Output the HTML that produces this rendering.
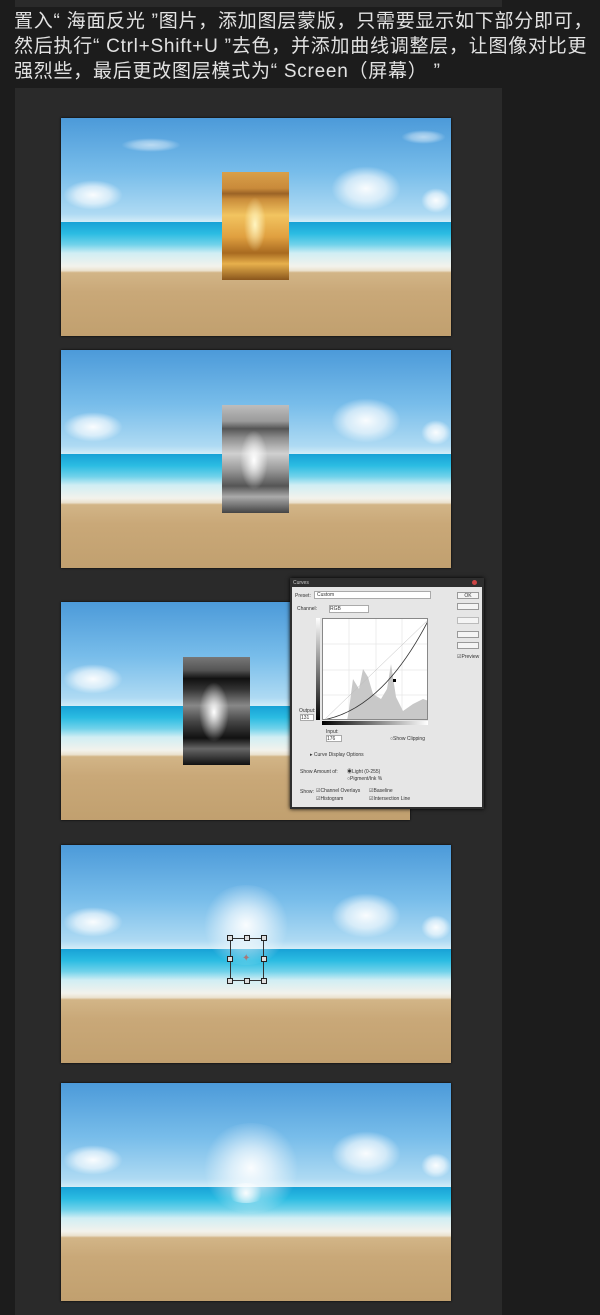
<!DOCTYPE html>
<html><head><meta charset="utf-8"><style>
*{margin:0;padding:0;box-sizing:border-box}
body{width:600px;height:1315px;background:#1c1c1c;position:relative;overflow:hidden;font-family:"Liberation Sans","Noto Sans CJK SC",sans-serif}
.panel{position:absolute;left:15px;width:487px;background:#2a2a2a}
.txt{position:absolute;left:14px;top:9px;color:#e2e2e2;font-size:19px;line-height:25px;letter-spacing:0.75px;white-space:nowrap}
.b{position:absolute;height:218px;overflow:hidden;background:linear-gradient(180deg,#4c9ad9 0%,#78bdea 25%,#aedaf3 44%,#d2ecf7 47.6%,#18a2d6 47.8%,#2bbce2 53%,#70d2ea 58%,#d0eef4 62%,#f3f2ec 68%,#ebe2cf 70%,#d2b587 71%,#c9a878 80%,#c1a06f 100%);box-shadow:0 0 2px #000}
.c{position:absolute;background:radial-gradient(ellipse at center,rgba(255,255,255,.95) 0%,rgba(255,255,255,.6) 40%,rgba(255,255,255,0) 70%)}
.glow{position:absolute;border-radius:50%;background:radial-gradient(circle,rgba(255,255,255,.95) 0%,rgba(255,255,255,.6) 30%,rgba(255,255,255,0) 70%)}
.strip{position:absolute;width:67px;height:108px}
.h{position:absolute;width:6px;height:6px;border:1px solid #222;background:#ddd}
</style></head><body>
<div class="panel" style="top:0;height:7px"></div>
<div class="panel" style="top:88px;height:1227px"></div>
<div class="txt">置入“ 海面反光 ”图片，添加图层蒙版，只需要显示如下部分即可，<br>然后执行“ Ctrl+Shift+U ”去色，并添加曲线调整层，让图像对比更<br>强烈些，最后更改图层模式为“ Screen（屏幕）  ”</div>

<!-- image 1 -->
<div class="b" style="left:61px;top:118px;width:390px">
 <div class="c" style="left:2px;top:62px;width:60px;height:30px"></div>
 <div class="c" style="left:270px;top:48px;width:70px;height:45px"></div>
 <div class="c" style="left:360px;top:70px;width:30px;height:25px"></div>
 <div class="c" style="left:60px;top:20px;width:60px;height:14px;opacity:.6"></div>
 <div class="c" style="left:340px;top:12px;width:45px;height:14px;opacity:.6"></div>
</div>
<div class="strip" style="left:222px;top:172px;background:linear-gradient(180deg,#d9a04a 0%,#c98a3a 15%,#9b6326 20%,#c98c3a 25%,#f2c460 40%,#e0a040 60%,#a86a20 75%,#e7b04c 85%,#8a561c 100%)"><div style="position:absolute;left:22px;top:25px;width:22px;height:55px;background:radial-gradient(ellipse,#fff5c0,rgba(255,220,120,0) 70%)"></div></div>

<!-- image 2 -->
<div class="b" style="left:61px;top:350px;width:390px">
 <div class="c" style="left:2px;top:62px;width:60px;height:30px"></div>
 <div class="c" style="left:270px;top:48px;width:70px;height:45px"></div>
 <div class="c" style="left:360px;top:70px;width:30px;height:25px"></div>
</div>
<div class="strip" style="left:222px;top:405px;background:linear-gradient(180deg,#bdbdbd 0%,#9a9a9a 15%,#555 22%,#8a8a8a 30%,#d0d0d0 45%,#999 60%,#555 75%,#aaa 85%,#444 100%)"><div style="position:absolute;left:18px;top:25px;width:28px;height:60px;background:radial-gradient(ellipse,#fff,rgba(255,255,255,0) 70%)"></div></div>

<!-- image 3 -->
<div class="b" style="left:61px;top:602px;width:349px">
 <div class="c" style="left:2px;top:62px;width:60px;height:30px"></div>
</div>
<div class="strip" style="left:183px;top:657px;background:linear-gradient(180deg,#777 0%,#555 12%,#111 20%,#333 30%,#888 45%,#444 60%,#111 75%,#666 85%,#111 100%)"><div style="position:absolute;left:16px;top:25px;width:30px;height:60px;background:radial-gradient(ellipse,#fff,rgba(255,255,255,0) 70%)"></div></div>

<!-- curves dialog -->
<div style="position:absolute;left:290px;top:578px;width:194px;height:231px;background:#2e2e2e;box-shadow:0 0 4px #000">
 <div style="position:absolute;left:3px;top:2px;font-size:5px;color:#ccc">Curves</div>
 <div style="position:absolute;left:182px;top:2px;width:5px;height:5px;border-radius:50%;background:#c44"></div>
 <div style="position:absolute;left:2px;top:9px;width:190px;height:220px;background:#e6e6e6;font-size:5px;color:#333">
  <div style="position:absolute;left:3px;top:6px">Preset:</div>
  <div style="position:absolute;left:22px;top:4px;width:117px;height:8px;background:#fff;border:1px solid #aaa;padding-left:2px">Custom</div>
  <div style="position:absolute;left:5px;top:19px">Channel:</div>
  <div style="position:absolute;left:37px;top:18px;width:40px;height:8px;background:#fff;border:1px solid #aaa">RGB</div>
  <div style="position:absolute;left:165px;top:5px;width:22px;height:7px;background:#f4f4f4;border:1px solid #999;text-align:center">OK</div>
  <div style="position:absolute;left:165px;top:16px;width:22px;height:7px;background:#f4f4f4;border:1px solid #999"></div>
  <div style="position:absolute;left:165px;top:30px;width:22px;height:7px;background:#f4f4f4;border:1px solid #bbb"></div>
  <div style="position:absolute;left:165px;top:44px;width:22px;height:7px;background:#f4f4f4;border:1px solid #999"></div>
  <div style="position:absolute;left:165px;top:55px;width:22px;height:7px;background:#f4f4f4;border:1px solid #999"></div>
  <div style="position:absolute;left:165px;top:67px;font-size:5px">☑Preview</div>
  <div style="position:absolute;left:30px;top:31px;width:106px;height:102px;background:#fff;border:1px solid #888;overflow:hidden">
   <svg width="106" height="102" viewBox="0 0 106 102">
    <g stroke="#ddd" stroke-width=".5"><line x1="26" y1="0" x2="26" y2="102"/><line x1="53" y1="0" x2="53" y2="102"/><line x1="79" y1="0" x2="79" y2="102"/><line x1="0" y1="25" x2="106" y2="25"/><line x1="0" y1="51" x2="106" y2="51"/><line x1="0" y1="76" x2="106" y2="76"/></g>
    <path d="M24 102 L26 90 L30 60 L36 70 L40 50 L45 58 L50 75 L58 80 L64 70 L68 45 L73 78 L80 92 L90 85 L100 80 L106 82 L106 102Z" fill="#c8c8c8"/>
    <line x1="0" y1="102" x2="106" y2="0" stroke="#bbb" stroke-width=".5"/>
    <path d="M0 101 Q60 90 106 0" stroke="#333" stroke-width=".8" fill="none"/>
    <rect x="70" y="60" width="3" height="3" fill="#000"/>
   </svg>
  </div>
  <div style="position:absolute;left:30px;top:134px;width:106px;height:4px;background:linear-gradient(90deg,#000,#fff)"></div>
  <div style="position:absolute;left:24px;top:31px;width:4px;height:102px;background:linear-gradient(#fff,#000)"></div>
  <div style="position:absolute;left:7px;top:121px">Output:</div>
  <div style="position:absolute;left:8px;top:127px;width:14px;height:7px;background:#fff;border:1px solid #aaa">131</div>
  <div style="position:absolute;left:34px;top:142px">Input:</div>
  <div style="position:absolute;left:34px;top:148px;width:16px;height:7px;background:#fff;border:1px solid #aaa">176</div>
  <div style="position:absolute;left:98px;top:149px">○Show Clipping</div>
  <div style="position:absolute;left:18px;top:165px">▸ Curve Display Options</div>
  <div style="position:absolute;left:8px;top:182px">Show Amount of:</div>
  <div style="position:absolute;left:55px;top:181px">◉Light (0-255)</div>
  <div style="position:absolute;left:55px;top:189px">○Pigment/Ink %</div>
  <div style="position:absolute;left:8px;top:202px">Show:</div>
  <div style="position:absolute;left:24px;top:201px">☑Channel Overlays</div>
  <div style="position:absolute;left:77px;top:201px">☑Baseline</div>
  <div style="position:absolute;left:24px;top:209px">☑Histogram</div>
  <div style="position:absolute;left:77px;top:209px">☑Intersection Line</div>
 </div>
</div>

<!-- image 4 -->
<div class="b" style="left:61px;top:845px;width:390px">
 <div class="c" style="left:2px;top:62px;width:60px;height:30px"></div>
 <div class="c" style="left:270px;top:48px;width:70px;height:45px"></div>
 <div class="c" style="left:360px;top:70px;width:30px;height:25px"></div>
 <div class="glow" style="left:140px;top:40px;width:90px;height:80px"></div>
</div>
<div style="position:absolute;left:230px;top:938px;width:34px;height:43px;border:1px solid #333"></div>
<div class="h" style="left:227px;top:935px"></div><div class="h" style="left:244px;top:935px"></div><div class="h" style="left:261px;top:935px"></div>
<div class="h" style="left:227px;top:956px"></div><div class="h" style="left:261px;top:956px"></div>
<div class="h" style="left:227px;top:978px"></div><div class="h" style="left:244px;top:978px"></div><div class="h" style="left:261px;top:978px"></div>
<div style="position:absolute;left:242px;top:953px;color:#a77;font-size:10px">✦</div>

<!-- image 5 -->
<div class="b" style="left:61px;top:1083px;width:390px">
 <div class="c" style="left:2px;top:62px;width:60px;height:30px"></div>
 <div class="c" style="left:270px;top:48px;width:70px;height:45px"></div>
 <div class="c" style="left:360px;top:70px;width:30px;height:25px"></div>
 <div class="glow" style="left:140px;top:40px;width:100px;height:90px"></div>
 <div class="glow" style="left:165px;top:100px;width:40px;height:20px"></div>
</div>
</body></html>
